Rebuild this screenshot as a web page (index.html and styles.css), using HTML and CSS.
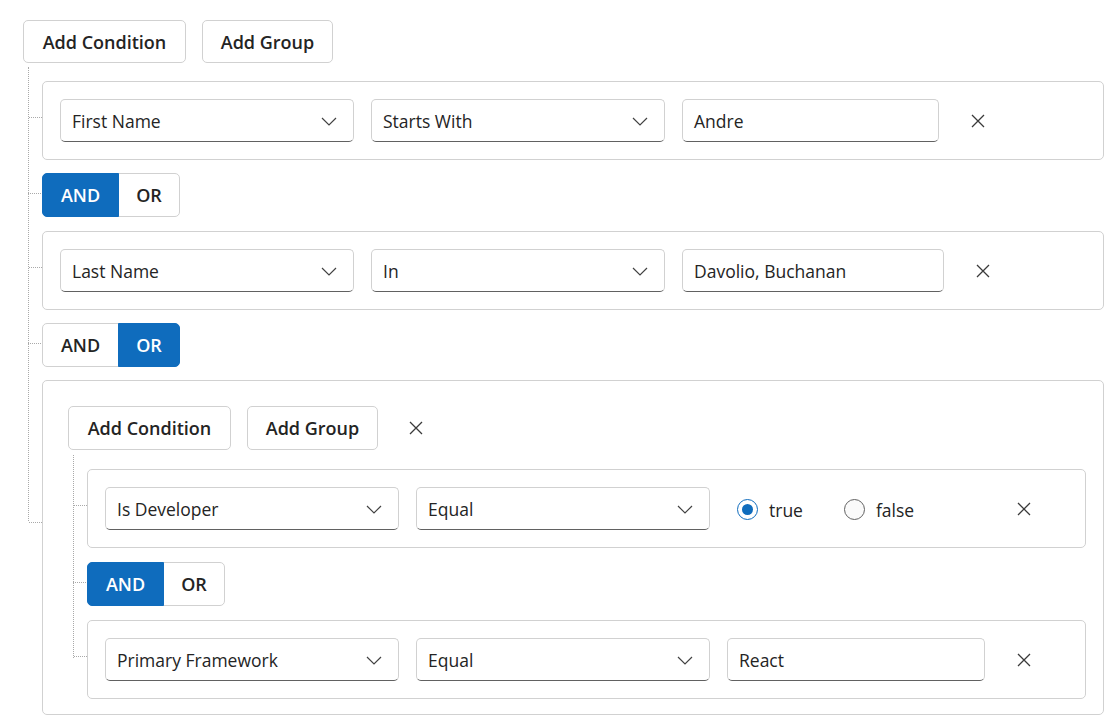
FILE: index.html
```html
<!DOCTYPE html>
<html lang="en">
<head>
<meta charset="utf-8">
<title>Query Builder</title>
<link rel="stylesheet" href="styles.css">
</head>
<body>
<div class="qb">
  <div class="group root">
    <div class="group-header">
      <button class="btn btn-cond">Add Condition</button>
      <button class="btn btn-group">Add Group</button>
    </div>
    <div class="group-body">
      <div class="item rule">
        <div class="select"><span>First Name</span><svg class="chev" width="16" height="9" viewBox="0 0 16 9"><path d="M1 1 L8 8 L15 1"/></svg></div>
        <div class="select"><span>Starts With</span><svg class="chev" width="16" height="9" viewBox="0 0 16 9"><path d="M1 1 L8 8 L15 1"/></svg></div>
        <div class="input w257">Andre</div>
        <button class="close" aria-label="Remove"><svg width="14" height="14" viewBox="0 0 14 14"><path d="M1 1 L13 13 M13 1 L1 13"/></svg></button>
      </div>
      <div class="item join">
        <span class="seg seg-and active">AND</span><span class="seg seg-or">OR</span>
      </div>
      <div class="item rule">
        <div class="select"><span>Last Name</span><svg class="chev" width="16" height="9" viewBox="0 0 16 9"><path d="M1 1 L8 8 L15 1"/></svg></div>
        <div class="select"><span>In</span><svg class="chev" width="16" height="9" viewBox="0 0 16 9"><path d="M1 1 L8 8 L15 1"/></svg></div>
        <div class="input w262">Davolio, Buchanan</div>
        <button class="close" aria-label="Remove"><svg width="14" height="14" viewBox="0 0 14 14"><path d="M1 1 L13 13 M13 1 L1 13"/></svg></button>
      </div>
      <div class="item join">
        <span class="seg seg-and">AND</span><span class="seg seg-or active">OR</span>
      </div>
      <div class="item group nested">
        <div class="group-header">
          <button class="btn btn-cond">Add Condition</button>
          <button class="btn btn-group">Add Group</button>
          <button class="close" aria-label="Remove group"><svg width="14" height="14" viewBox="0 0 14 14"><path d="M1 1 L13 13 M13 1 L1 13"/></svg></button>
        </div>
        <div class="group-body">
          <div class="item rule">
            <div class="select"><span>Is Developer</span><svg class="chev" width="16" height="9" viewBox="0 0 16 9"><path d="M1 1 L8 8 L15 1"/></svg></div>
            <div class="select"><span>Equal</span><svg class="chev" width="16" height="9" viewBox="0 0 16 9"><path d="M1 1 L8 8 L15 1"/></svg></div>
            <div class="radios">
              <label class="radio"><span class="dot checked"></span><span>true</span></label>
              <label class="radio radio-2"><span class="dot"></span><span>false</span></label>
            </div>
            <button class="close" aria-label="Remove"><svg width="14" height="14" viewBox="0 0 14 14"><path d="M1 1 L13 13 M13 1 L1 13"/></svg></button>
          </div>
          <div class="item join">
            <span class="seg seg-and active">AND</span><span class="seg seg-or">OR</span>
          </div>
          <div class="item rule">
            <div class="select"><span>Primary Framework</span><svg class="chev" width="16" height="9" viewBox="0 0 16 9"><path d="M1 1 L8 8 L15 1"/></svg></div>
            <div class="select"><span>Equal</span><svg class="chev" width="16" height="9" viewBox="0 0 16 9"><path d="M1 1 L8 8 L15 1"/></svg></div>
            <div class="input w258">React</div>
            <button class="close" aria-label="Remove"><svg width="14" height="14" viewBox="0 0 14 14"><path d="M1 1 L13 13 M13 1 L1 13"/></svg></button>
          </div>
        </div>
      </div>
    </div>
  </div>
</div>
</body>
</html>
```
FILE: styles.css
```css
* { box-sizing: border-box; }

body {
  margin: 0;
  background: #ffffff;
  color: #242424;
  font-family: "Open Sans", "Noto Sans", sans-serif;
  font-size: 17.5px;
}

.qb {
  padding: 20px 5px 0 23px;
}

.group-header {
  display: flex;
  align-items: center;
  gap: 16px;
  height: 43px;
}

.btn {
  height: 43px;
  border: 1px solid #d1d1d1;
  border-radius: 5px;
  background: #ffffff;
  color: #242424;
  font-family: "Open Sans", "Noto Sans", sans-serif;
  font-size: 18px;
  font-weight: 600;
  padding: 0;
  text-align: center;
}

.btn-cond { width: 163px; }
.btn-group { width: 131px; }

.group-body {
  position: relative;
  margin: 18px 0 0 19px;
  display: flex;
  flex-direction: column;
  gap: 14px;
}

.group-body::before {
  content: "";
  position: absolute;
  left: -14px;
  top: -14px;
  border-left: 1px dotted #a9a9a9;
}

.root > .group-body::before { height: 454px; }
.nested > .group-body::before { height: 203px; }

.item { position: relative; }

.item::before {
  content: "";
  position: absolute;
  left: -14px;
  width: 13px;
  border-top: 1px dotted #a9a9a9;
}

.rule::before { top: 35px; }
.join::before { top: 20px; }
.nested::before { top: 141px; }

.root > .group-body > .join { margin-top: -1px; }
.root > .group-body > .nested { margin-top: -1px; }

.nested {
  border: 1px solid #d1d1d1;
  border-radius: 5px;
  padding: 25px 17px 15px 25px;
}

.nested > .group-header { height: 44px; }
.nested > .group-header .btn { height: 44px; }
.nested > .group-body { margin-top: 19px; }
.nested > .group-header .close { margin-left: 6px; }

.rule {
  border: 1px solid #d1d1d1;
  border-radius: 5px;
  padding: 17px;
  display: flex;
  align-items: center;
  gap: 17px;
}

.select,
.input {
  height: 43px;
  border: 1px solid #d1d1d1;
  border-bottom-color: #616161;
  border-radius: 5px;
  display: flex;
  align-items: center;
  padding: 1px 16px 0 11px;
  background: #ffffff;
}

.select {
  width: 294px;
  justify-content: space-between;
}

.chev path {
  fill: none;
  stroke: #424242;
  stroke-width: 1.2;
}

.w257 { width: 257px; }
.w262 { width: 262px; }
.w258 { width: 258px; }

.close {
  width: 32px;
  height: 32px;
  margin-left: 6px;
  border: 0;
  background: transparent;
  padding: 0;
  display: flex;
  align-items: center;
  justify-content: center;
}

.close path {
  fill: none;
  stroke: #3a3a3a;
  stroke-width: 1.3;
}

.join {
  display: flex;
  align-self: flex-start;
}

.seg {
  height: 44px;
  display: flex;
  align-items: center;
  justify-content: center;
  border: 1px solid #d1d1d1;
  background: #ffffff;
  font-size: 18px;
  font-weight: 600;
  color: #242424;
}

.seg-and {
  width: 77px;
  border-radius: 5px 0 0 5px;
}

.seg-or {
  width: 62px;
  margin-left: -1px;
  border-radius: 0 5px 5px 0;
}

.seg.active {
  background: #0f6cbd;
  border-color: #0f6cbd;
  color: #ffffff;
  position: relative;
}

.radios {
  width: 258px;
  display: flex;
  align-items: center;
  padding: 2px 0 0 10px;
}

.radio {
  display: flex;
  align-items: center;
  gap: 11px;
}

.radio-2 { margin-left: 41px; }

.dot {
  width: 21px;
  height: 21px;
  border: 1px solid #616161;
  border-radius: 50%;
  background: #fafafa;
  display: flex;
  align-items: center;
  justify-content: center;
}

.dot.checked {
  border-color: #0f6cbd;
  background: #ffffff;
}

.dot.checked::after {
  content: "";
  width: 11px;
  height: 11px;
  border-radius: 50%;
  background: #0f6cbd;
}
```
